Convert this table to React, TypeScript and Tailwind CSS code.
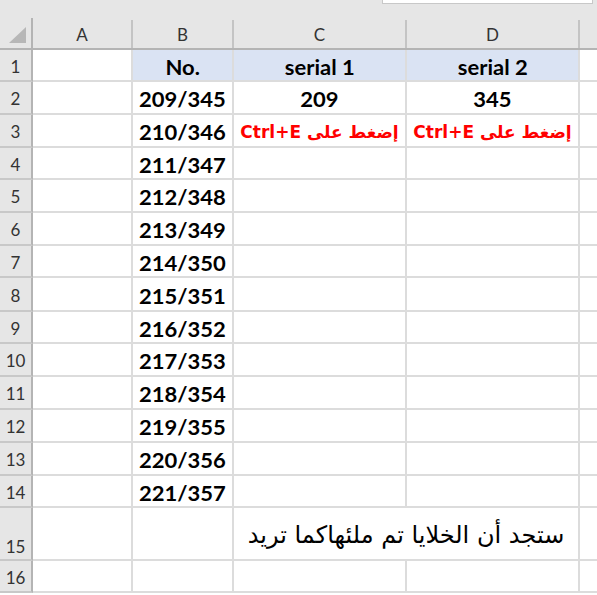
import React from "react";

type Row = {
  n: number;
  h: string;
  b?: string;
  c?: string;
  d?: string;
  head?: boolean;
  red?: boolean;
  merged?: string;
};

const rows: Row[] = [
  { n: 1, h: "h-[32px]", b: "No.", c: "serial 1", d: "serial 2", head: true },
  { n: 2, h: "h-[33px]", b: "209/345", c: "209", d: "345" },
  { n: 3, h: "h-[33px]", b: "210/346", red: true },
  { n: 4, h: "h-[32px]", b: "211/347" },
  { n: 5, h: "h-[33px]", b: "212/348" },
  { n: 6, h: "h-[33px]", b: "213/349" },
  { n: 7, h: "h-[32px]", b: "214/350" },
  { n: 8, h: "h-[34px]", b: "215/351" },
  { n: 9, h: "h-[32px]", b: "216/352" },
  { n: 10, h: "h-[33px]", b: "217/353" },
  { n: 11, h: "h-[33px]", b: "218/354" },
  { n: 12, h: "h-[33px]", b: "219/355" },
  { n: 13, h: "h-[33px]", b: "220/356" },
  { n: 14, h: "h-[32px]", b: "221/357" },
  { n: 15, h: "h-[53px]", merged: "ستجد أن الخلايا تم ملئهاكما تريد" },
  { n: 16, h: "h-[32px]" },
];

function Bold({ children }: { children: React.ReactNode }) {
  return (
    <span className="inline-block scale-x-[1.1] font-['Lato'] font-bold text-[20px] leading-none text-black">
      {children}
    </span>
  );
}

function Red() {
  return (
    <span
      dir="rtl"
      className="font-['DejaVu_Sans',sans-serif] font-bold text-[17px] leading-none text-[#ff0000] whitespace-nowrap"
    >
      إضغط على Ctrl+E
    </span>
  );
}

const cell = "border-r-2 border-b-2 border-[#dcdcdc] flex items-center justify-center";

export default function App() {
  return (
    <div className="w-[597px] h-[595px] bg-[#e6e6e6] overflow-hidden font-['Lato',sans-serif]">
      {/* top strip */}
      <div className="h-[18px] flex pl-[382px] pr-[4px]">
        <div className="flex-1 h-[4px] bg-white border-b border-l border-r border-[#c8c8c8]" />
      </div>
      {/* column header */}
      <div className="h-[32px] flex border-b-2 border-[#b4b4b4]">
        <div className="w-[33px] border-r-2 border-[#b4b4b4] relative">
          <div className="absolute right-[5px] bottom-[5px] w-0 h-0 border-l-[17px] border-l-transparent border-b-[16px] border-b-[#b7b7b7]" />
        </div>
        {[
          ["A", "w-[100px]"],
          ["B", "w-[101px]"],
          ["C", "w-[173px]"],
          ["D", "w-[173px]"],
        ].map(([l, w]) => (
          <div key={l} className={`${w} flex items-center justify-center pt-[2px]`}>
            <div className="flex-1 text-center text-[17px] text-[#333] leading-none">{l}</div>
            <div className="w-[2px] h-[28px] self-end bg-[#c4c4c4]" />
          </div>
        ))}
        <div className="flex-1" />
      </div>
      {/* rows */}
      {rows.map((r) => (
        <div key={r.n} className={`${r.h} flex`}>
          <div
            className={`w-[33px] border-r-2 border-b-2 border-r-[#b4b4b4] border-b-[#c8c8c8] flex justify-center ${
              r.n === 15 ? "items-end pb-[4px]" : "items-center pt-[2px]"
            } text-[17px] text-[#333] leading-none`}
          >
            {r.n}
          </div>
          <div className={`w-[100px] bg-white ${cell}`} />
          <div className={`w-[101px] ${r.head ? "bg-[#dae3f3]" : "bg-white"} ${cell} pt-[3px]`}>
            {r.b && <Bold>{r.b}</Bold>}
          </div>
          {r.merged !== undefined ? (
            <div className={`w-[346px] bg-white ${cell} items-end pb-[12px]`}>
              <span dir="rtl" className="font-['DejaVu_Sans',sans-serif] text-[24px] leading-none text-black whitespace-nowrap">
                {r.merged}
              </span>
            </div>
          ) : (
            <>
              <div className={`w-[173px] ${r.head ? "bg-[#dae3f3]" : "bg-white"} ${cell} pt-[3px]`}>
                {r.red ? <Red /> : r.c && <Bold>{r.c}</Bold>}
              </div>
              <div className={`w-[173px] ${r.head ? "bg-[#dae3f3]" : "bg-white"} ${cell} pt-[3px]`}>
                {r.red ? <Red /> : r.d && <Bold>{r.d}</Bold>}
              </div>
            </>
          )}
          <div className="flex-1 bg-white border-b-2 border-[#dcdcdc]" />
        </div>
      ))}
      <div className="h-[2px] bg-white" />
    </div>
  );
}
